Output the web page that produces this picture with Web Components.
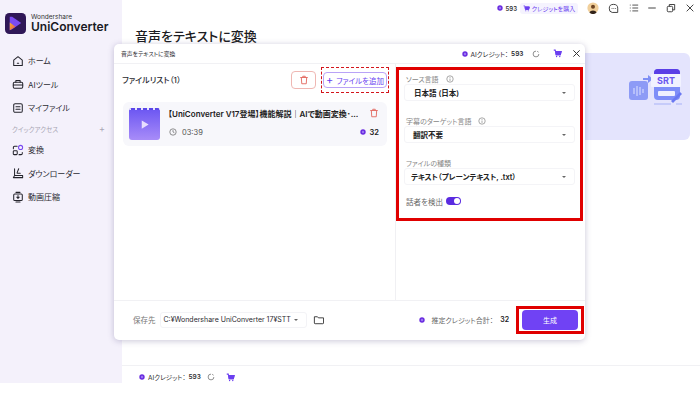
<!DOCTYPE html>
<html lang="ja">
<head>
<meta charset="utf-8">
<title>UniConverter</title>
<style>
  html, body { margin: 0; background: #fff; }
  body { font-family: Inter, "Noto Sans CJK JP", sans-serif; color: #222; font-feature-settings: "palt"; }
</style>
</head>
<body>
<app-shell>
  <side-bar slot="side">
    <nav-item label="ホーム" icon="home"></nav-item>
    <nav-item label="AIツール" icon="tool"></nav-item>
    <nav-item label="マイファイル" icon="file"></nav-item>
    <quick-head></quick-head>
    <nav-item label="変換" icon="conv"></nav-item>
    <nav-item label="ダウンローダー" icon="down"></nav-item>
    <nav-item label="動画圧縮" icon="comp"></nav-item>
  </side-bar>
  <top-bar slot="top"></top-bar>
  <hero-card slot="main"></hero-card>
  <credit-bar slot="bottom"></credit-bar>
  <convert-dialog slot="dialog">
    <file-row slot="files"></file-row>
    <select-field slot="options" label="ソース言語" info value="日本語 (日本)" style="--pad:9px"></select-field>
    <select-field slot="options" label="字幕のターゲット言語" info value="翻訳不要" style="--pad:8px"></select-field>
    <select-field slot="options" label="ファイルの種類" value="テキスト（プレーンテキスト, .txt）" style="--pad:6px"></select-field>
  </convert-dialog>
</app-shell>

<script>
const COIN = `<svg viewBox="0 0 8 8" width="6" height="6"><circle cx="4" cy="4" r="3.6" fill="#6a2be0"/><circle cx="4" cy="4" r="1.6" fill="#9a78f0"/></svg>`;
const CART = `<svg viewBox="0 0 12 12" width="9" height="9" fill="none" stroke="#6b3ff0" stroke-width="1.4"><path d="M1 1.5h2l1.2 6h5.6l1-4.2H3.6" /><path d="M3.6 3.3h7.2l-1 4.2H4.2z" fill="#6b3ff0"/><circle cx="4.8" cy="10" r=".9" fill="#6b3ff0" stroke="none"/><circle cx="9" cy="10" r=".9" fill="#6b3ff0" stroke="none"/></svg>`;
const TRASH = `<svg viewBox="0 0 12 12" width="10" height="10" fill="none" stroke="#e2685f" stroke-width="1.1"><path d="M1.5 3h9M4.500 3V1.500h3V3M2.800 3l.5 7.500h5.400l.5-7.500"/></svg>`;
const REFRESH = `<svg viewBox="0 0 10 10" width="8" height="8" fill="none" stroke="#666" stroke-width=".9"><path d="M8.600 5A3.600 3.600 0 1 1 5 1.400"/><path d="M6.600 1.200 8 3"/></svg>`;
const INFO = `<svg viewBox="0 0 10 10" width="8" height="8" fill="none" stroke="#777" stroke-width=".8"><circle cx="5" cy="5" r="4"/><path d="M5 4.400v3M5 2.600v1"/></svg>`;

const NAV_ICONS = {
  home: `<path d="M2 6 7 2l5 4v6.200H2z"/><path d="M6.200 9.500h1.600"/>`,
  tool: `<rect x="1.500" y="5" width="11" height="7" rx="1.400"/><path d="M4.500 5V2.800h5V5M1.500 8.200h11"/>`,
  file: `<rect x="2" y="2" width="10" height="10" rx="1.600"/><path d="M4.600 5.600h4.800M4.600 8.400h4.800"/>`,
  conv: `<rect x="1.500" y="7.800" width="4.600" height="4.600" rx="1"/><path d="M6 2.600H3a1.400 1.400 0 0 0-1.400 1.400v1.400M8.200 12.400h2.400a1.400 1.400 0 0 0 1.400-1.400V9.800"/><circle cx="10" cy="4" r="2.400" stroke="#7a4af0"/>`,
  down: `<path d="M3 2.200v7.600h9M3 9.800 1.600 12.400h10.800V9.800"/><path d="M6 7.400h3.600M7.800 2 6 6.600"/>`,
  comp: `<rect x="2" y="3.400" width="10" height="7.600" rx="1.200"/><path d="M4.600 1.600h4.800M4.600 12.800h4.800M7 5.200v3.400M5.600 7.200 7 8.600l1.400-1.400"/>`
};

class AppShell extends HTMLElement {
  constructor() {
    super();
    this.attachShadow({mode: "open"});
    this.shadowRoot.innerHTML = `
      <style>
        :host { display: flex; position: relative; width: 700px; height: 383px; overflow: hidden; background: #fff; }
        .side { width: 122px; flex: none; background: #f4f1fb; }
        .content { flex: 1; display: flex; flex-direction: column; min-width: 0; }
        h1 { margin: 0; padding: 10px 0 7px 13px; font-size: 13px; line-height: 20px; font-weight: 500; color: #1c1c22; }
        .mid { flex: 1; min-height: 0; }
        .dialog { position: absolute; left: 114px; top: 44px; }
      </style>
      <div class="side"><slot name="side"></slot></div>
      <div class="content">
        <slot name="top"></slot>
        <h1>音声をテキストに変換</h1>
        <div class="mid"><slot name="main"></slot></div>
        <slot name="bottom"></slot>
      </div>
      <div class="dialog"><slot name="dialog"></slot></div>
    `;
  }
}
customElements.define("app-shell", AppShell);

class SideBar extends HTMLElement {
  constructor() {
    super();
    this.attachShadow({mode: "open"});
    this.shadowRoot.innerHTML = `
      <style>
        :host { display: block; padding: 12px 0 0 12px; }
        .logo { display: flex; align-items: center; gap: 5px; margin-left: -7px; height: 22px; margin-bottom: 15px; }
        .names { display: flex; flex-direction: column; }
        .w { font-size: 6.5px; line-height: 7px; color: #333; }
        .u { font-size: 12px; line-height: 12px; font-weight: 600; color: #1a1a24; }
        nav { display: flex; flex-direction: column; }
      </style>
      <div class="logo">
        <svg viewBox="0 0 22 22" width="21" height="21">
          <defs><linearGradient id="g" x1="0" y1="0" x2="1" y2="1"><stop offset="0" stop-color="#f5b13c"/><stop offset="1" stop-color="#e8563f"/></linearGradient></defs>
          <rect width="22" height="22" rx="4.500" fill="#2f1757"/>
          <path d="M5 4h2.500L17 10.500 7.500 17 5 18z" fill="#7b4bf2"/>
          <path d="M5 10l6 4.400L5 18z" fill="url(#g)"/>
        </svg>
        <div class="names"><span class="w">Wondershare</span><span class="u">UniConverter</span></div>
      </div>
      <nav><slot></slot></nav>
    `;
  }
}
customElements.define("side-bar", SideBar);

class NavItem extends HTMLElement {
  connectedCallback() {
    const root = this.attachShadow({mode: "open"});
    root.innerHTML = `
      <style>
        :host { display: flex; align-items: center; gap: 4px; height: 23.600px; font-size: 8px; color: #2b2b33; }
        svg { flex: none; }
      </style>
      <svg viewBox="0 0 14 14" width="12" height="12" fill="none" stroke="#24242c" stroke-width="1.200" stroke-linejoin="round" stroke-linecap="round">${NAV_ICONS[this.getAttribute("icon")]}</svg>
      <span>${this.getAttribute("label")}</span>
    `;
  }
}
customElements.define("nav-item", NavItem);

class QuickHead extends HTMLElement {
  constructor() {
    super();
    this.attachShadow({mode: "open"});
    this.shadowRoot.innerHTML = `
      <style>
        :host { display: flex; justify-content: space-between; align-items: center; height: 18px; margin-right: 17px; font-size: 6.500px; color: #a9a6b4; }
        b { font-weight: 400; font-size: 9px; }
      </style>
      <span>クイックアクセス</span><b>+</b>
    `;
  }
}
customElements.define("quick-head", QuickHead);

class TopBar extends HTMLElement {
  constructor() {
    super();
    this.attachShadow({mode: "open"});
    this.shadowRoot.innerHTML = `
      <style>
        :host { display: flex; align-items: center; justify-content: flex-end; height: 16px; padding: 0 5px 0 0; font-size: 6px; }
        .credits { display: flex; align-items: center; gap: 3px; font-weight: 600; color: #333; margin-right: 3px; }
        .buy { display: flex; align-items: center; justify-content: center; gap: 2px; box-sizing: border-box; width: 58px; height: 11px; border-radius: 3px; background: #f5f3fe; color: #6b3ff0; margin-right: 9px; white-space: nowrap; }
        .tools { display: flex; align-items: center; gap: 9px; }
        .ls { margin-left: 1px; }
        .mn { margin-left: -1px; }
        svg { display: block; }
      </style>
      <span class="credits">${COIN}593</span>
      <span class="buy">${CART.replace('width="9" height="9"', 'width="7" height="7"')}クレジットを購入</span>
      <div class="tools">
        <svg viewBox="0 0 12 12" width="12" height="12"><circle cx="6" cy="6" r="5.600" fill="#f1cf9a"/><circle cx="6" cy="4.800" r="2" fill="#6d4320"/><path d="M2.400 10.600a3.800 3.200 0 0 1 7.200 0 5.600 5.600 0 0 1-7.200 0z" fill="#33241a"/></svg>
        <svg viewBox="0 0 12 12" width="11" height="11" fill="none" stroke="#333" stroke-width="1"><path d="M6 1.500a4.600 4.200 0 0 1 4.600 4.200v4.600H4.600a3.600 4.200 0 0 1-3.200-4.600A4.600 4.200 0 0 1 6 1.500z"/><path d="M4 6h.8M6 6h.8M8 6h.8"/></svg>
        <svg class="ls" viewBox="0 0 12 12" width="10" height="10" fill="none" stroke="#333" stroke-width="1"><path d="M1 2.500h1M4 2.500h7M1 6h1M4 6h7M1 9.500h1M4 9.500h7"/></svg>
        <svg class="mn" viewBox="0 0 12 12" width="10" height="10" fill="none" stroke="#333" stroke-width="1.100"><path d="M1.500 6h9"/></svg>
        <svg viewBox="0 0 12 12" width="10" height="10" fill="none" stroke="#333" stroke-width="1.100"><rect x="1.500" y="4" width="6.500" height="6.500" rx="1.200"/><path d="M4 4V1.800h6.400v6.400H8"/></svg>
        <svg viewBox="0 0 12 12" width="10" height="10" fill="none" stroke="#333" stroke-width="1.100"><path d="M2 2l8 8M10 2l-8 8"/></svg>
      </div>
    `;
  }
}
customElements.define("top-bar", TopBar);

class HeroCard extends HTMLElement {
  constructor() {
    super();
    this.attachShadow({mode: "open"});
    this.shadowRoot.innerHTML = `
      <style>
        :host { display: flex; justify-content: flex-end; align-items: center; height: 87px; margin: 0 10px 0 13px; padding-right: 5px; border-radius: 6px; background: #e4e4fd; }
        svg { display: block; margin-bottom: 20px; }
        text { font: 700 9px Inter, sans-serif; }
      </style>
      <svg viewBox="0 0 56 38" width="56" height="38">
        <rect x="0" y="13" width="19" height="19" rx="3" fill="#8d9bf6"/>
        <path d="M5 20v6M8 18v10M11 19v8M14 21v4" stroke="#dfe3ff" stroke-width="1"/>
        <path d="M14 10h5V7l5 4-5 4v-3h-5z" fill="#7f8ff5"/>
        <rect x="25" y="1" width="26" height="31" rx="4" fill="#7e8ef8"/>
        <path d="M25 5a4 4 0 0 1 4-4h18a4 4 0 0 1 4 4v2H25z" fill="#5a3fe6"/>
        <rect x="22" y="6" width="30" height="13" rx="1" fill="#f1f2ff"/>
        <text x="37" y="16" text-anchor="middle" fill="#6a55ef">SRT</text>
        <rect x="29" y="23" width="17" height="5" rx="1" fill="#eef0ff"/>
        <path d="M42 33l9-9 2 2-9 9z" fill="#6a78f2"/>
        <path d="M25 36h17M47 36h6" stroke="#a8b2f7" stroke-width="1"/>
      </svg>
    `;
  }
}
customElements.define("hero-card", HeroCard);

class CreditBar extends HTMLElement {
  constructor() {
    super();
    this.attachShadow({mode: "open"});
    this.shadowRoot.innerHTML = `
      <style>
        :host { display: flex; align-items: center; box-sizing: border-box; height: 18px; padding: 5px 0 0 17px; border-top: 1px solid #f1f1f4; font-size: 6.500px; color: #333; }
        span { display: flex; align-items: center; gap: 3px; }
        b { font-weight: 600; }
        .r { margin: 0 11px 0 6px; display: flex; }
      </style>
      <span>${COIN}AIクレジット：<b>593</b></span><span class="r">${REFRESH}</span>${CART}
    `;
  }
}
customElements.define("credit-bar", CreditBar);

class ConvertDialog extends HTMLElement {
  constructor() {
    super();
    this.attachShadow({mode: "open"});
    this.shadowRoot.innerHTML = `
      <style>
        :host { display: flex; flex-direction: column; width: 471px; height: 296px; background: #fff; border-radius: 5px; box-shadow: 0 1px 6px rgba(60,50,110,.28); font-size: 8px; color: #2a2a30; }
        header { display: flex; align-items: center; height: 19px; padding: 0 4.500px 0 7px; border-bottom: 1px solid #f1f1f4; font-size: 5.800px; }
        header .t { flex: 1; }
        .ai { display: flex; align-items: center; gap: 3px; font-size: 6.500px; }
        .ai b { font-weight: 600; margin-right: 5px; }
        .ai svg { display: block; }
        .cart { margin: 0 10px 0 13px; display: flex; }
        .x { display: flex; }
        .body { flex: 1; display: flex; min-height: 0; }
        .left { width: 282px; flex: none; box-sizing: border-box; padding: 3px 8px 0 9px; border-right: 1px solid #f0f0f3; }
        .bar { display: flex; align-items: flex-start; height: 28px; }
        .bar .n { flex: 1; font-size: 8px; font-weight: 500; line-height: 26px; margin-left: -1px; }
        .del { display: flex; align-items: center; justify-content: center; box-sizing: border-box; width: 25px; height: 18px; margin-top: 4px; border: 1px solid #efb7b3; border-radius: 4px; margin-right: 5px; }
        .dash { box-sizing: border-box; height: 26px; padding: 4px 1px; border: 1px dashed #d3141b; margin-right: -2px; display: flex; }
        .add { display: flex; align-items: center; justify-content: center; gap: 3px; box-sizing: border-box; width: 64px; height: 16px; border: 1px solid #b9a3f7; border-radius: 4px; color: #6b3ff0; font-size: 7.500px; white-space: nowrap; }
        .add i { font-style: normal; font-size: 11px; line-height: 1; }
        .files { margin-top: 7px; }
        .right { flex: 1; padding: 3px 2px 0 0; }
        .red { box-sizing: border-box; height: 154px; border: 3px solid #e00000; padding: 5px 5px 0 5px; display: flex; flex-direction: column; gap: 16px; }
        .spk { display: flex; align-items: center; gap: 3px; height: 10px; margin: -5px 0 0 2px; font-size: 7.500px; color: #666; }
        .tog { width: 15px; height: 8px; border-radius: 4px; background: #5a2be0; position: relative; }
        .tog::after { content: ""; position: absolute; right: 1px; top: 1px; width: 6px; height: 6px; border-radius: 50%; background: #fff; }
        footer { display: flex; align-items: center; box-sizing: border-box; height: 40px; border-top: 1px solid #f1f1f4; padding: 0 1px 2px 19px; }
        .lbl { color: #777; font-size: 7.500px; margin-right: 4px; }
        .path { display: flex; align-items: center; justify-content: space-between; box-sizing: border-box; width: 147px; height: 16px; padding: 0 8px 0 3px; border: 1px solid #f3f3f6; border-radius: 3px; font-size: 7px; white-space: nowrap; }
        .caret { width: 0; height: 0; border: 2px solid transparent; border-top: 2.500px solid #666; border-bottom: 0; }
        .folder { margin-left: 6px; display: block; }
        .sum { display: flex; align-items: center; gap: 3px; margin-left: auto; margin-right: 7px; font-size: 7px; color: #666; }
        .sum b { color: #222; font-weight: 600; margin-left: 4px; }
        .hl { border: 3px solid #e00000; padding: 1px 3px; }
        .go { box-sizing: border-box; width: 56px; height: 20px; border-radius: 4px; background: #7042f4; color: #fff; display: flex; align-items: center; justify-content: center; font-size: 7px; }
      </style>
      <header>
        <span class="t">音声をテキストに変換</span>
        <span class="ai">${COIN}AIクレジット：<b>593</b>${REFRESH}</span>
        <span class="cart">${CART}</span>
        <span class="x"><svg viewBox="0 0 10 10" width="9" height="9" fill="none" stroke="#333" stroke-width="1.100"><path d="M1.500 1.500l7 7M8.500 1.500l-7 7"/></svg></span>
      </header>
      <div class="body">
        <div class="left">
          <div class="bar">
            <span class="n">ファイルリスト（1）</span>
            <span class="del">${TRASH}</span>
            <span class="dash"><span class="add"><i>+</i>ファイルを追加</span></span>
          </div>
          <div class="files"><slot name="files"></slot></div>
        </div>
        <div class="right">
          <div class="red">
            <slot name="options"></slot>
            <div class="spk">話者を検出<span class="tog"></span></div>
          </div>
        </div>
      </div>
      <footer>
        <span class="lbl">保存先</span>
        <span class="path"><span>C:¥Wondershare UniConverter 17¥STT</span><span class="caret"></span></span>
        <svg class="folder" viewBox="0 0 12 12" width="11" height="11" fill="none" stroke="#333" stroke-width="1"><path d="M1.500 3h3.400l1 1.200h5.600v5.600a.8.8 0 0 1-.8.8H2.300a.8.8 0 0 1-.8-.8z"/></svg>
        <span class="sum">${COIN}<span style="margin-left:3px">推定クレジット合計：</span><b>32</b></span>
        <span class="hl"><span class="go">生成</span></span>
      </footer>
    `;
  }
}
customElements.define("convert-dialog", ConvertDialog);

class FileRow extends HTMLElement {
  constructor() {
    super();
    this.attachShadow({mode: "open"});
    this.shadowRoot.innerHTML = `
      <style>
        :host { display: flex; align-items: center; gap: 8px; box-sizing: border-box; height: 44px; padding: 0 8px 0 6px; border-radius: 6px; background: #f7f7fb; font-size: 8px; }
        .th { position: relative; flex: none; width: 31px; height: 32px; border-radius: 3px; background: linear-gradient(#6a55f2, #a88cf8); display: flex; align-items: center; justify-content: center; overflow: hidden; }
        .th::before { content: ""; position: absolute; left: 0; right: 0; top: 0; height: 2px; background: repeating-linear-gradient(90deg, #e6e2fd 0 2px, #5a46e8 2px 6px); }
        .info { flex: 1; min-width: 0; display: flex; flex-direction: column; gap: 9px; padding-bottom: 3px; }
        .line { display: flex; align-items: center; justify-content: space-between; height: 10px; }
        .title { font-weight: 600; white-space: nowrap; overflow: hidden; font-size: 8px; color: #222; }
        .time, .cost { display: flex; align-items: center; gap: 5px; color: #555; font-size: 7.500px; }
        .time { margin-left: 1px; }
        .cost { gap: 4px; color: #222; font-weight: 600; }
      </style>
      <div class="th"><svg viewBox="0 0 12 12" width="11" height="11"><path d="M3 1.500 10.500 6 3 10.500z" fill="#e7defe"/></svg></div>
      <div class="info">
        <div class="line"><span class="title">【UniConverter V17登場】機能解説｜AIで動画変換･...</span>${TRASH}</div>
        <div class="line">
          <span class="time"><svg viewBox="0 0 10 10" width="8" height="8" fill="none" stroke="#555" stroke-width=".8"><circle cx="5" cy="5" r="4"/><path d="M5 2.600V5l1.800 1"/></svg>03:39</span>
          <span class="cost">${COIN}32</span>
        </div>
      </div>
    `;
  }
}
customElements.define("file-row", FileRow);

class SelectField extends HTMLElement {
  connectedCallback() {
    const root = this.attachShadow({mode: "open"});
    root.innerHTML = `
      <style>
        :host { display: block; font-size: 7.500px; }
        .l { display: flex; align-items: center; gap: 7px; height: 8px; color: #888; font-size: 7px; margin: 0 0 1px 2px; }
        .box { display: flex; align-items: center; justify-content: space-between; box-sizing: border-box; height: 17px; padding: 0 8px 0 var(--pad, 8px); border: 1px solid #f4f4f7; border-radius: 3px; font-weight: 600; color: #222; white-space: nowrap; }
        .c { width: 0; height: 0; border: 2px solid transparent; border-top: 2.500px solid #666; border-bottom: 0; }
        svg { display: block; }
      </style>
      <div class="l">${this.getAttribute("label")}${this.hasAttribute("info") ? INFO : ""}</div>
      <div class="box"><span>${this.getAttribute("value")}</span><span class="c"></span></div>
    `;
  }
}
customElements.define("select-field", SelectField);
</script>
</body>
</html>
